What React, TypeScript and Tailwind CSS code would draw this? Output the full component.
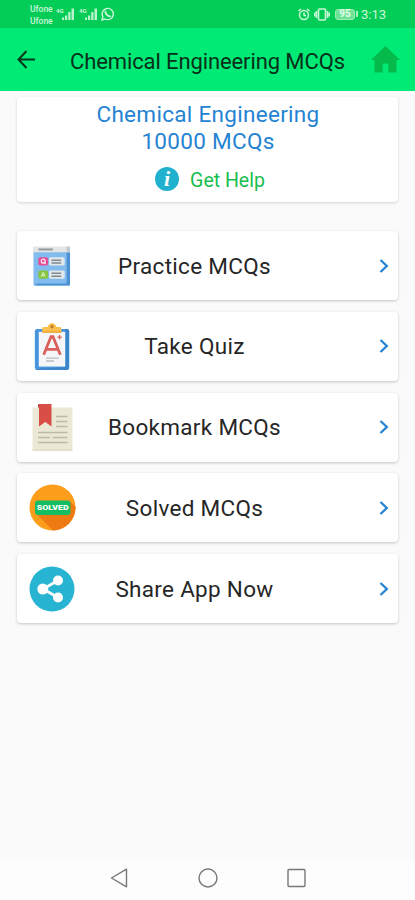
import React from "react";

const QuestionsIcon = () => (
  <svg width="38" height="40" viewBox="0 0 39 40" aria-hidden="true">
    <rect x="0.5" y="1" width="37.5" height="39" rx="1" fill="#7DB8EB" />
    <path d="M34 6h4v33q0 1-1 1H1.500L5 37.500h29z" fill="#4A90D2" />
    <path d="M1 6h33.500v32H1z" fill="#82BCEE" />
    <path d="M1.500 0h35q1.500 0 1.500 1.500V6H0V1.500Q0 0 1.500 0z" fill="#E4E6E6" />
    <path d="M34.500 0h2q1.500 0 1.500 1.500V6h-3.500z" fill="#BFC9D0" />
    <rect x="5.500" y="2" width="15" height="2" fill="#929AA0" />
    <rect x="5.500" y="11" width="10" height="8.500" rx="2" fill="#E64A96" />
    <rect x="16.500" y="11" width="16" height="8.500" rx="1.500" fill="#E2E7EA" />
    <path d="M19 14h10M19 17h10" stroke="#7F8990" strokeWidth="1.500" />
    <circle cx="10.500" cy="15" r="2" fill="none" stroke="#FBE3EF" strokeWidth="1.300" />
    <path d="M11 15.500l2 2.500" stroke="#FBE3EF" strokeWidth="1.200" />
    <rect x="5.500" y="24.500" width="10" height="8.500" rx="2" fill="#87C540" />
    <rect x="16.500" y="24.500" width="16" height="8.500" rx="1.500" fill="#E2E7EA" />
    <path d="M19 27.500h10M19 30.500h10" stroke="#7F8990" strokeWidth="1.500" />
    <path d="M8.500 31l2-4.500 2 4.500M9.200 29.800h2.600" fill="none" stroke="#E3F4CF" strokeWidth="1" />
  </svg>
);

const QuizIcon = () => (
  <svg width="36" height="47" viewBox="0 0 36 48" aria-hidden="true">
    <rect x="0.500" y="6" width="35" height="42" rx="2.500" fill="#4796DD" />
    <path d="M31.500 6h1.500q2.500 0 2.500 2.500v37Q35.500 48 33 48H3q-1.500 0-2-1l30.500-2z" fill="#3B85CA" />
    <path d="M4.500 9h27v35.500h-27z" fill="#F4F6F7" />
    <path d="M10 4h3.500q1-3.500 4.500-4 3.500.5 4.500 4H26q1.500 0 1.500 1.500V10H8V5.500Q8 4 10 4z" fill="#FBC04B" />
    <path d="M8 8.500h19.500V10H8z" fill="#EBA93B" />
    <circle cx="18" cy="3.800" r="1.700" fill="#B77A2A" />
    <path d="M9.500 32.500L17 14h2L26.500 32.500M12.500 27h11" fill="none" stroke="#D9605B" strokeWidth="2.800" />
    <path d="M23.500 14.500h4.500M25.700 12.200v4.600" stroke="#D9605B" strokeWidth="1.300" />
    <path d="M12 35.800h13M12 38.800h8" stroke="#B7BEC5" strokeWidth="1.300" />
  </svg>
);

const BookmarkIcon = () => (
  <svg width="41" height="47" viewBox="0 0 41 47" aria-hidden="true">
    <rect x="0.500" y="3.500" width="40" height="43.500" fill="#EBE8D6" />
    <path d="M0.500 46h40" stroke="#E2DECA" strokeWidth="1.500" />
    <path d="M7 0h12.500v22.500L13.250 18 7 22.500z" fill="#D94F48" />
    <path d="M6 1q0-1 1-1v3.500H6z" fill="#A93A38" />
    <path
      d="M24 12.500h11.500M24 17.500h11.500M24 22.500h11.500M6 28.500h29.500M6 33.500h12M20.500 33.500h15M6 38.500h29.500"
      stroke="#BDBAA9"
      strokeWidth="1.300"
    />
  </svg>
);

const SolvedIcon = () => (
  <svg width="47" height="47" viewBox="0 0 47 47" aria-hidden="true">
    <circle cx="23.500" cy="23.500" r="23" fill="#FC9D1B" />
    <path d="M7 29.500L24 46.500A23 23 0 0 0 46.500 23L41 17.500z" fill="#ED7A12" />
    <rect x="6" y="16.500" width="35.500" height="14.500" rx="3" fill="#14BC62" />
    <text
      x="23.700"
      y="26.200"
      textAnchor="middle"
      textLength="32"
      lengthAdjust="spacingAndGlyphs"
      className="fill-white font-['Roboto',sans-serif] text-[8px] font-black"
    >
      SOLVED
    </text>
  </svg>
);

const ShareIcon = () => (
  <svg width="46" height="46" viewBox="0 0 46 46" aria-hidden="true">
    <circle cx="23" cy="23" r="22.500" fill="#27B3D2" />
    <path d="M29 14.500L14 23l15 8.500" fill="none" stroke="#fff" strokeWidth="2.800" />
    <circle cx="29" cy="14.500" r="5" fill="#fff" />
    <circle cx="13.800" cy="23" r="5.500" fill="#fff" />
    <circle cx="29" cy="31.500" r="5" fill="#fff" />
  </svg>
);

const Signal = () => (
  <svg width="19" height="14" viewBox="0 0 19 14" aria-hidden="true">
    <text x="0" y="6" className="fill-[#c9f7d8] font-['Roboto',sans-serif] text-[6px] font-bold">
      4G
    </text>
    <path d="M6 13v-2.500h2V13zM9 13V8.500h2.200V13zM12.200 13V5h2.300v8zM15.500 13V1.500H18V13z" fill="#b9f4cc" />
  </svg>
);

const StatusBar = () => (
  <div className="flex h-7 items-center justify-between bg-[#04CD57] pl-[30px] pr-[29px] text-[#c9f7d8]">
    <div className="flex items-center">
      <div className="w-[26px] pt-px text-[8.500px] font-medium leading-3">
        <div>Ufone</div>
        <div>Ufone</div>
      </div>
      <Signal />
      <div className="ml-1 flex items-center gap-[3px]">
        <Signal />
        <svg width="14" height="14" viewBox="0 0 14 14" fill="none" stroke="currentColor" aria-hidden="true">
          <path d="M1 13l.9-3.200A5.600 5.600 0 1 1 4.200 12z" strokeWidth="1.400" />
          <path d="M4.800 4.200c-.8.900-.1 2.300 1.200 3.600 1.300 1.300 2.800 1.900 3.700 1" strokeWidth="1.900" />
        </svg>
      </div>
    </div>
    <div className="flex items-center">
      <svg width="12" height="13" viewBox="0 0 12 13" fill="none" stroke="currentColor" strokeWidth="1.500" aria-hidden="true">
        <circle cx="6" cy="7" r="4.500" />
        <path d="M6 4.500V7l2 1M.5 3L3 1M11.500 3L9 1" />
      </svg>
      <svg className="ml-1" width="16" height="13" viewBox="0 0 16 13" fill="none" stroke="currentColor" strokeWidth="1.600" aria-hidden="true">
        <rect x="4.500" y="1" width="7" height="11" rx="1" />
        <path d="M2.500 3v7M.7 4.500v4M13.500 3v7M15.300 4.500v4" />
      </svg>
      <div className="ml-[5px] flex h-[11px] w-5 items-center justify-center rounded-[3px] border border-[#9beeb6] bg-[#6fe395] text-[10px] font-bold leading-none text-[#e5fced]">
        95
      </div>
      <div className="ml-px h-1.5 w-0.5 bg-[#a9f0c0]" />
      <div className="ml-[3px] pt-px text-[13px] leading-4 text-[#c9f7d8]">3:13</div>
    </div>
  </div>
);

const Header = () => (
  <header className="flex h-[63px] items-center bg-[#00EA76] pl-[17px] pr-[15px]">
    <svg width="19" height="19" viewBox="0 0 19 19" fill="none" stroke="#05391c" strokeWidth="2" aria-hidden="true">
      <path d="M9.500 1L1.500 9.500l8 8.500M1.500 9.500H18" />
    </svg>
    <h1 className="ml-[34px] mt-[3px] flex-1 whitespace-nowrap text-[22px] tracking-[-0.11px] text-[#06301a]">
      Chemical Engineering MCQs
    </h1>
    <svg width="29" height="27" viewBox="0 0 29 27" fill="#05B94B" aria-hidden="true">
      <path d="M14.500 0L0 14h3.500v12.500h8.200v-9h5.600v9h8.200V14H29z" />
    </svg>
  </header>
);

const items = [
  { label: "Practice MCQs", icon: <QuestionsIcon /> },
  { label: "Take Quiz", icon: <QuizIcon /> },
  { label: "Bookmark MCQs", icon: <BookmarkIcon /> },
  { label: "Solved MCQs", icon: <SolvedIcon /> },
  { label: "Share App Now", icon: <ShareIcon /> },
];

const NavBar = () => (
  <nav className="flex h-[41px] items-center bg-[#FDFDFD] pl-[110px] pr-[109px]">
    <div className="flex flex-1 items-center justify-between pb-1">
      <svg width="18" height="20" viewBox="0 0 18 20" fill="none" stroke="#777" strokeWidth="1.400" aria-hidden="true">
        <path d="M16.500 1.200v17.600L1.500 10z" strokeLinejoin="round" />
      </svg>
      <svg width="20" height="20" viewBox="0 0 20 20" fill="none" stroke="#777" strokeWidth="1.400" aria-hidden="true">
        <circle cx="10" cy="10" r="9" />
      </svg>
      <svg width="19" height="20" viewBox="0 0 19 20" fill="none" stroke="#777" strokeWidth="1.400" aria-hidden="true">
        <rect x="1" y="1.500" width="17" height="17" rx="1" />
      </svg>
    </div>
  </nav>
);

const App = () => {
  return (
    <div className="flex h-[900px] w-[415px] flex-col overflow-hidden bg-[#FAFAFA] font-['Roboto',sans-serif]">
      <StatusBar />
      <Header />

      <main className="flex-1 px-[17px] pt-1.5">
        {/* Title card */}
        <section className="h-[105px] rounded bg-white pt-[3px] text-center shadow-[0_1px_3px_rgba(0,0,0,0.16)]">
          <h2 className="pl-[1px] pt-px text-[22.500px] leading-[27px] tracking-[0.3px] text-[#2583D2]">
            Chemical Engineering
            <br />
            10000 MCQs
          </h2>
          <div className="mt-3 flex items-center justify-center gap-[11px] pl-[5px]">
            <span className="flex size-6 items-center justify-center rounded-full bg-[#20B1CF] font-['Liberation_Serif',serif] text-[22px] font-bold italic leading-none text-white">
              i
            </span>
            <span className="pt-[3px] text-[19.500px] leading-[21px] text-[#17BE50]">Get Help</span>
          </div>
        </section>

        {/* Menu */}
        <ul className="mt-[29px] flex flex-col gap-[11.750px]">
          {items.map((item) => (
            <li
              key={item.label}
              className="flex h-[69px] items-center rounded bg-white shadow-[0_1px_3px_rgba(0,0,0,0.22)]"
            >
              <span className="flex w-[70px] justify-center">{item.icon}</span>
              <span className="flex-1 whitespace-nowrap pl-px pt-0.5 text-center text-[22.500px] tracking-[0.3px] text-[#262626]">
                {item.label}
              </span>
              <span className="flex w-[97px] justify-end pr-[9px]">
                <svg width="10" height="14" viewBox="0 0 10 14" fill="none" stroke="#2583D2" strokeWidth="2.300" aria-hidden="true">
                  <path d="M1.500 1L7.800 7l-6.300 6" />
                </svg>
              </span>
            </li>
          ))}
        </ul>
      </main>

      <NavBar />
    </div>
  );
};

export default App;
